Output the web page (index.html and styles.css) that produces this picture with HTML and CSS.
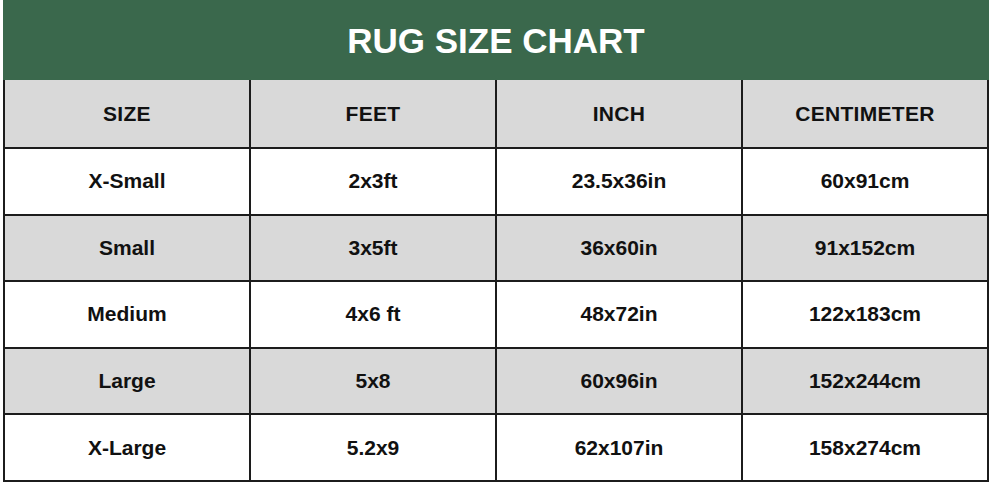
FILE: index.html
```html
<!DOCTYPE html>
<html lang="en">
<head>
<meta charset="utf-8">
<title>Rug Size Chart</title>
<link rel="stylesheet" href="styles.css">
</head>
<body>
<div class="chart">
  <div class="title">RUG SIZE CHART</div>
  <div class="grid">
    <div class="cell head">SIZE</div>
    <div class="cell head">FEET</div>
    <div class="cell head">INCH</div>
    <div class="cell head">CENTIMETER</div>

    <div class="cell">X-Small</div>
    <div class="cell">2x3ft</div>
    <div class="cell">23.5x36in</div>
    <div class="cell">60x91cm</div>

    <div class="cell alt">Small</div>
    <div class="cell alt">3x5ft</div>
    <div class="cell alt">36x60in</div>
    <div class="cell alt">91x152cm</div>

    <div class="cell">Medium</div>
    <div class="cell">4x6 ft</div>
    <div class="cell">48x72in</div>
    <div class="cell">122x183cm</div>

    <div class="cell alt">Large</div>
    <div class="cell alt">5x8</div>
    <div class="cell alt">60x96in</div>
    <div class="cell alt">152x244cm</div>

    <div class="cell">X-Large</div>
    <div class="cell">5.2x9</div>
    <div class="cell">62x107in</div>
    <div class="cell">158x274cm</div>
  </div>
</div>
</body>
</html>
```

FILE: styles.css
```css
html, body {
  margin: 0;
  padding: 0;
  background: #ffffff;
}

body {
  font-family: "Liberation Sans", Arial, sans-serif;
}

.chart {
  width: 986px;
  margin-left: 3px;
}

.title {
  height: 80px;
  background: #3a684c;
  color: #ffffff;
  font-weight: bold;
  font-size: 35px;
  display: flex;
  align-items: center;
  justify-content: center;
  padding-top: 2px;
  box-sizing: border-box;
}

.grid {
  display: grid;
  grid-template-columns: repeat(4, 1fr);
  grid-template-rows: 67px repeat(5, 64.6px);
  gap: 2px;
  padding: 0 2px 2px 2px;
  background: #1c1c1c;
}

.cell {
  background: #ffffff;
  color: #111111;
  font-weight: bold;
  font-size: 21px;
  display: flex;
  align-items: center;
  justify-content: center;
}

.head {
  background: #d9d9d9;
  letter-spacing: 0.3px;
}

.alt {
  background: #d9d9d9;
}
```
